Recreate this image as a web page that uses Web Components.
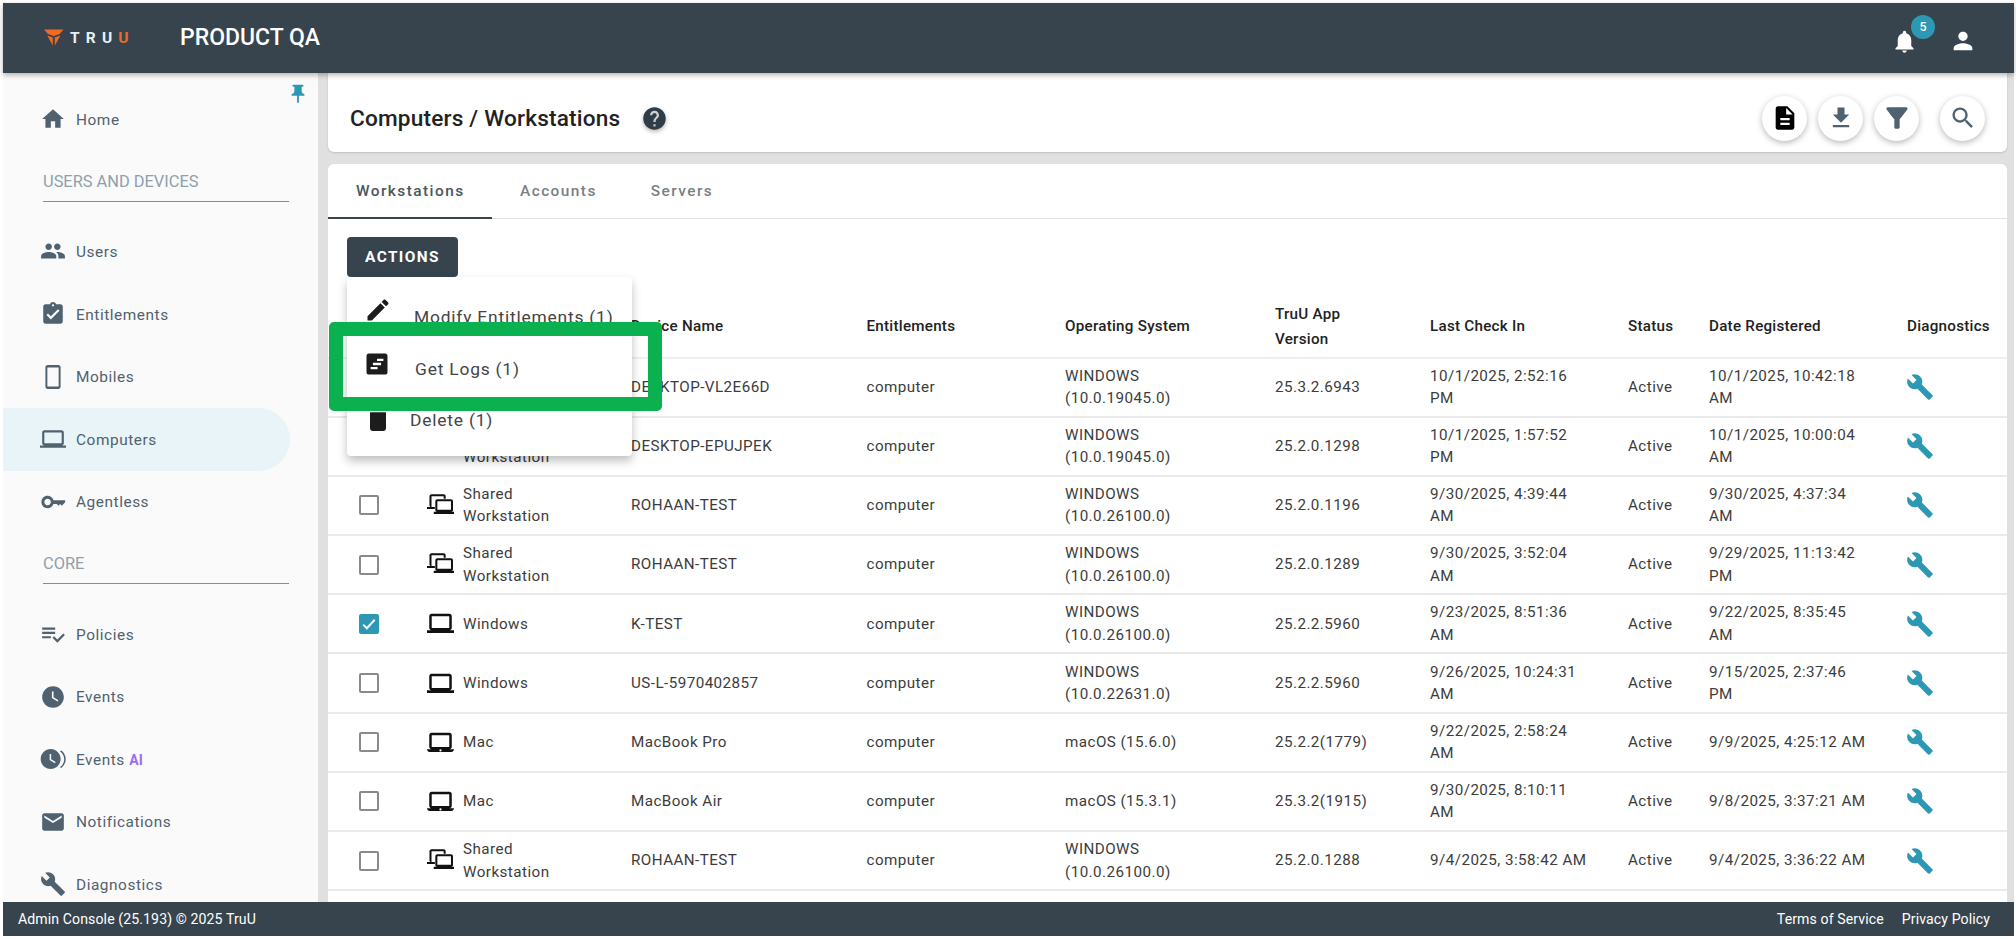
<!DOCTYPE html>
<html lang="en"><head><meta charset="utf-8"><title>TruU</title>
<style>
html,body{margin:0;height:100%;overflow:hidden;background:#fff;font-family:Roboto,"Liberation Sans",sans-serif}
</style></head><body>
<app-shell>
  <app-header slot="header" title-text="PRODUCT QA" badge="5"></app-header>
  <side-nav slot="nav">
    <nav-item icon="home">Home</nav-item>
    <nav-section>USERS AND DEVICES</nav-section>
    <nav-item icon="people">Users</nav-item>
    <nav-item icon="entitle">Entitlements</nav-item>
    <nav-item icon="phone">Mobiles</nav-item>
    <nav-item icon="laptop" active>Computers</nav-item>
    <nav-item icon="key">Agentless</nav-item>
    <nav-section>CORE</nav-section>
    <nav-item icon="policy">Policies</nav-item>
    <nav-item icon="clock">Events</nav-item>
    <nav-item icon="clockai">Events <b slot="tag">AI</b></nav-item>
    <nav-item icon="mail">Notifications</nav-item>
    <nav-item icon="wrench">Diagnostics</nav-item>
  </side-nav>
  <page-head slot="main">Computers / Workstations</page-head>
  <tab-card slot="main">
    <device-row kind="shared" type="Shared&#10;Workstation" name="DESKTOP-VL2E66D" os="WINDOWS&#10;(10.0.19045.0)" ver="25.3.2.6943" last="10/1/2025, 2:52:16&#10;PM" date="10/1/2025, 10:42:18&#10;AM"></device-row>
    <device-row kind="shared" type="Shared&#10;Workstation" name="DESKTOP-EPUJPEK" os="WINDOWS&#10;(10.0.19045.0)" ver="25.2.0.1298" last="10/1/2025, 1:57:52&#10;PM" date="10/1/2025, 10:00:04&#10;AM"></device-row>
    <device-row kind="shared" type="Shared&#10;Workstation" name="ROHAAN-TEST" os="WINDOWS&#10;(10.0.26100.0)" ver="25.2.0.1196" last="9/30/2025, 4:39:44&#10;AM" date="9/30/2025, 4:37:34&#10;AM"></device-row>
    <device-row kind="shared" type="Shared&#10;Workstation" name="ROHAAN-TEST" os="WINDOWS&#10;(10.0.26100.0)" ver="25.2.0.1289" last="9/30/2025, 3:52:04&#10;AM" date="9/29/2025, 11:13:42&#10;PM"></device-row>
    <device-row checked kind="laptop" type="Windows" name="K-TEST" os="WINDOWS&#10;(10.0.26100.0)" ver="25.2.2.5960" last="9/23/2025, 8:51:36&#10;AM" date="9/22/2025, 8:35:45&#10;AM"></device-row>
    <device-row kind="laptop" type="Windows" name="US-L-5970402857" os="WINDOWS&#10;(10.0.22631.0)" ver="25.2.2.5960" last="9/26/2025, 10:24:31&#10;AM" date="9/15/2025, 2:37:46&#10;PM"></device-row>
    <device-row kind="mac" type="Mac" name="MacBook Pro" os="macOS (15.6.0)" ver="25.2.2(1779)" last="9/22/2025, 2:58:24&#10;AM" date="9/9/2025, 4:25:12 AM"></device-row>
    <device-row kind="mac" type="Mac" name="MacBook Air" os="macOS (15.3.1)" ver="25.3.2(1915)" last="9/30/2025, 8:10:11&#10;AM" date="9/8/2025, 3:37:21 AM"></device-row>
    <device-row kind="shared" type="Shared&#10;Workstation" name="ROHAAN-TEST" os="WINDOWS&#10;(10.0.26100.0)" ver="25.2.0.1288" last="9/4/2025, 3:58:42 AM" date="9/4/2025, 3:36:22 AM"></device-row>
  </tab-card>
  <app-footer slot="footer"></app-footer>
  <focus-mark slot="overlay"></focus-mark>
</app-shell>
<script>
const P={
home:'<path d="M10 20v-6h4v6h5v-8h3L12 3 2 12h3v8z"/>',
people:'<path d="M16 11c1.66 0 2.99-1.34 2.99-3S17.66 5 16 5c-1.66 0-3 1.34-3 3s1.34 3 3 3zm-8 0c1.66 0 2.99-1.34 2.99-3S9.66 5 8 5C6.34 5 5 6.34 5 8s1.34 3 3 3zm0 2c-2.33 0-7 1.17-7 3.5V19h14v-2.5c0-2.33-4.67-3.5-7-3.5zm8 0c-.29 0-.62.02-.97.05 1.16.84 1.97 1.97 1.97 3.45V19h6v-2.5c0-2.33-4.67-3.5-7-3.5z"/>',
entitle:'<path d="M19 3h-4.18C14.4 1.84 13.3 1 12 1c-1.3 0-2.4.84-2.82 2H5c-1.1 0-2 .9-2 2v14c0 1.1.9 2 2 2h14c1.1 0 2-.9 2-2V5c0-1.1-.9-2-2-2zm-7 0c.55 0 1 .45 1 1s-.45 1-1 1-1-.45-1-1 .45-1 1-1zm-2 14l-4-4 1.41-1.41L10 14.17l6.59-6.59L18 9l-8 8z"/>',
phone:'<path fill-rule="evenodd" d="M17 1H7C5.9 1 5 1.9 5 3v18c0 1.1.9 2 2 2h10c1.1 0 2-.9 2-2V3c0-1.1-.9-2-2-2zM6.8 3.2h10.4v17.6H6.8z"/>',
laptop:'<path d="M20 18c1.1 0 1.99-.9 1.99-2L22 6c0-1.1-.9-2-2-2H4c-1.1 0-2 .9-2 2v10c0 1.1.9 2 2 2H0v2h24v-2h-4zM4 6h16v10H4V6z"/>',
key:'<path fill-rule="evenodd" d="M12.4 10.2C11.6 7.8 9.5 6.3 7 6.3c-3.2 0-5.7 2.5-5.7 5.7s2.5 5.7 5.7 5.7c2.5 0 4.6-1.5 5.4-3.9h3.1l1.5 1.6 1.6-1.6 1.5 1.6 3.1-3.2v-1.8H12.4zM7 15c-1.7 0-3-1.3-3-3s1.3-3 3-3 3 1.3 3 3-1.3 3-3 3z"/>',
policy:'<path d="M14 10H2v2h12v-2zm0-4H2v2h12V6zM2 16h8v-2H2v2zm19.5-4.5L23 13l-6.99 7-4.51-4.5L13 14l3.01 3 5.49-5.5z"/>',
clock:'<path d="M12 2C6.5 2 2 6.5 2 12s4.5 10 10 10 10-4.5 10-10S17.5 2 12 2zm4.2 14.2L11 13V7h1.5v5.2l4.5 2.7-.8 1.3z"/>',
clockai:'<path transform="translate(-1.2 1) scale(.92)" d="M12 2C6.5 2 2 6.5 2 12s4.5 10 10 10 10-4.5 10-10S17.5 2 12 2zm4.2 14.2L11 13V7h1.5v5.2l4.5 2.7-.8 1.3z"/><path d="M19 4.5c2.4 1.8 4 4.7 4 7.7s-1.6 6-4 7.7" fill="none" stroke="currentColor" stroke-width="1.4"/>',
mail:'<path d="M20 4H4c-1.1 0-1.99.9-1.99 2L2 18c0 1.1.9 2 2 2h16c1.1 0 2-.9 2-2V6c0-1.1-.9-2-2-2zm0 4l-8 5-8-5V6l8 5 8-5v2z"/>',
wrench:'<path d="M22.7 19l-9.1-9.1c.9-2.3.4-5-1.5-6.9-2-2-5-2.4-7.4-1.3L9 6 6 9 1.6 4.7C.4 7.1.9 10.1 2.9 12.1c1.9 1.9 4.6 2.4 6.9 1.5l9.1 9.1c.4.4 1 .4 1.4 0l2.3-2.3c.5-.4.5-1.1.1-1.4z"/>',
bell:'<path d="M12 22c1.1 0 2-.9 2-2h-4c0 1.1.89 2 2 2zm6-6v-5c0-3.07-1.64-5.64-4.5-6.32V4c0-.83-.67-1.5-1.5-1.5s-1.5.67-1.5 1.5v.68C7.63 5.36 6 7.92 6 11v5l-2 2v1h16v-1l-2-2z"/>',
person:'<path d="M12 12c2.21 0 4-1.79 4-4s-1.79-4-4-4-4 1.79-4 4 1.79 4 4 4zm0 2c-2.67 0-8 1.34-8 4v2h16v-2c0-2.66-5.33-4-8-4z"/>',
doc:'<path d="M14 2H6c-1.1 0-1.99.9-1.99 2L4 20c0 1.1.89 2 1.99 2H18c1.1 0 2-.9 2-2V8l-6-6zm2 16H8v-2h8v2zm0-4H8v-2h8v2zm-3-5V3.5L18.5 9H13z"/>',
download:'<path d="M19 9h-4V3H9v6H5l7 7 7-7zM5 18v2h14v-2H5z"/>',
filter:'<path d="M4.25 5.61C6.27 8.2 10 13 10 13v6c0 .55.45 1 1 1h2c.55 0 1-.45 1-1v-6s3.72-4.8 5.74-7.39c.51-.66.04-1.61-.79-1.61H5.04c-.83 0-1.3.95-.79 1.61z"/>',
search:'<path d="M15.5 14h-.79l-.28-.27C15.41 12.59 16 11.11 16 9.5 16 5.91 13.09 3 9.5 3S3 5.91 3 9.5 5.91 16 9.5 16c1.61 0 3.09-.59 4.23-1.57l.27.28v.79l5 4.99L20.49 19l-4.99-5zm-6 0C7.01 14 5 11.99 5 9.5S7.01 5 9.5 5 14 7.01 14 9.5 11.99 14 9.5 14z"/>',
help:'<path d="M12 2C6.48 2 2 6.48 2 12s4.48 10 10 10 10-4.48 10-10S17.52 2 12 2zm1 17h-2v-2h2v2zm2.07-7.75l-.9.92C13.45 12.9 13 13.5 13 15h-2v-.5c0-1.1.45-2.1 1.17-2.83l1.24-1.26c.37-.36.59-.86.59-1.41 0-1.1-.9-2-2-2s-2 .9-2 2H8c0-2.21 1.79-4 4-4s4 1.79 4 4c0 .88-.36 1.68-.93 2.25z"/>',
edit:'<path d="M3 17.25V21h3.75L17.81 9.94l-3.75-3.75L3 17.25zM20.71 7.04c.39-.39.39-1.02 0-1.41l-2.34-2.34c-.39-.39-1.02-.39-1.41 0l-1.83 1.83 3.75 3.75 1.83-1.83z"/>',
trash:'<path d="M6 19c0 1.1.9 2 2 2h8c1.1 0 2-.9 2-2V7H6v12zM19 4h-3.5l-1-1h-5l-1 1H5v2h14V4z"/>',
logs:'<path fill-rule="evenodd" d="M19 3H5C3.9 3 3 3.9 3 5v14c0 1.1.9 2 2 2h14c1.1 0 2-.9 2-2V5c0-1.1-.9-2-2-2zM12 7.5h5.5v2H12zM8.5 11h7v2h-7zM6.5 14.5h6v2h-6z"/>',
pin:'<path d="M16 9V4h1c.55 0 1-.45 1-1s-.45-1-1-1H7c-.55 0-1 .45-1 1s.45 1 1 1h1v5c0 1.66-1.34 3-3 3v2h5.97v7l1 1 1-1v-7H19v-2c-1.66 0-3-1.34-3-3z"/>',
wlaptop:'<path fill-rule="evenodd" d="M20 18c1.1 0 2-.9 2-2V5.4c0-1.1-.9-2-2-2H4c-1.1 0-2 .9-2 2V16c0 1.1.9 2 2 2H0v2.4h24V18h-4zM4.2 5.6h15.6V16H4.2z"/>',
mac:'<path fill-rule="evenodd" d="M20 18c1.1 0 2-.9 2-2V5.4c0-1.1-.9-2-2-2H4c-1.1 0-2 .9-2 2V16c0 1.1.9 2 2 2H0c0 1.2 1 2.4 2.2 2.4h19.6c1.2 0 2.2-1.2 2.2-2.4h-4zM4.2 5.6h15.6V16H4.2zM12 20a1 1 0 1 1 0-2 1 1 0 0 1 0 2z"/>',
shared:'<path fill-rule="evenodd" d="M14.8 2H4.2C3 2 2.2 2.8 2.2 4v7.8c0 .7.3 1.2.8 1.6H0V15h7v-1.7H4V3.8h10.8V6h1.8V4c0-1.2-.8-2-1.8-2z"/><path fill-rule="evenodd" d="M21.7 17.6c.8 0 1.4-.7 1.4-1.5V8.2c0-1.1-.8-1.8-1.8-1.8H9.2c-1 0-1.8.7-1.8 1.8v7.9c0 .8.6 1.5 1.4 1.5H6v1.9h18v-1.9h-2.3zM9.2 8.2h12.1v7.6H9.2z"/>'
};
function def(name,css,html,init){
  customElements.define(name,class extends HTMLElement{
    constructor(){super();this.attachShadow({mode:'open'}).innerHTML='<style>'+css+'</style>'+html;}
    connectedCallback(){if(init&&!this._i){this._i=1;init(this,this.shadowRoot)}}
  });
}
const esc=s=>(s||'').replace(/&/g,'&amp;').replace(/</g,'&lt;');

customElements.define('ui-icon',class extends HTMLElement{
  static get observedAttributes(){return ['name','size']}
  constructor(){super();this.attachShadow({mode:'open'})}
  connectedCallback(){this.draw()}
  attributeChangedCallback(){if(this.isConnected)this.draw()}
  draw(){
    const s=this.getAttribute('size')||26;
    this.shadowRoot.innerHTML='<style>:host{display:inline-flex;flex:none;width:'+s+'px;height:'+s+'px;color:inherit}svg{width:100%;height:100%;display:block;fill:currentColor}</style><svg viewBox="0 0 24 24" aria-hidden="true">'+(P[this.getAttribute('name')]||'')+'</svg>';
  }
});

def('app-shell',`
:host{display:grid;position:relative;box-sizing:border-box;height:939px;padding:3px 2px 3px 3px;grid-template-rows:70px 1fr 34px;grid-template-columns:315px 1fr;overflow:hidden}
.h{grid-column:1/3;position:relative;z-index:5;box-shadow:0 2px 5px rgba(0,0,0,.3)}
.n{min-height:0;overflow:hidden;background:#fafafa}
.m{min-height:0;overflow:hidden;background:#e0e0e0;padding:0 7px 0 10px;display:flex;flex-direction:column;gap:12px}
.f{grid-column:1/3}
`,`<div class="h"><slot name="header"></slot></div><div class="n"><slot name="nav"></slot></div><div class="m"><slot name="main"></slot></div><div class="f"><slot name="footer"></slot></div><slot name="overlay"></slot>`);

def('app-header',`
:host{display:flex;align-items:center;height:70px;background:#37444d;color:#fff;padding-left:41px;box-sizing:border-box}
.logo{display:flex;align-items:center;width:136px}
.word{font:700 15.5px Roboto,sans-serif;letter-spacing:6.2px;margin-left:6px;white-space:nowrap;color:#eceff1}
.word i{font-style:normal;color:#f26a21}
h1{font:500 23px Roboto,sans-serif;margin:0;flex:1;margin-top:-1px}
.bell{position:relative;display:flex;margin-right:31px;margin-top:6px}
.badge{position:absolute;left:20px;top:-13px;width:24px;height:24px;border-radius:50%;background:#2d98b3;font:500 12.5px/24px Roboto,sans-serif;text-align:center;color:#fff}
.me{display:flex;margin-right:37px;margin-top:6px}
`,`<div class="logo"><svg width="20" height="18" viewBox="0 0 20 18"><path fill="#f26a21" d="M0 .5h19.5L15.6 5 9.8 7 4 5zM3.2 6.6l5.6 2v7.9zM16.4 6.6l-5.6 2v7.9z"/></svg><span class="word">TRU<i>U</i></span></div><h1></h1><div class="bell"><ui-icon name="bell" size="27"></ui-icon><span class="badge"></span></div><div class="me"><ui-icon name="person" size="28"></ui-icon></div>`,
(e,r)=>{r.querySelector('h1').textContent=e.getAttribute('title-text');r.querySelector('.badge').textContent=e.getAttribute('badge')});

def('side-nav',`
:host{display:block;position:relative;padding-top:15px;height:100%;box-sizing:border-box;color:#50626f}
.pin{position:absolute;left:284px;top:10px;color:#2d98b3}
`,`<ui-icon class="pin" name="pin" size="22"></ui-icon><slot></slot>`);

def('nav-section',`
:host{display:block;box-sizing:content-box;margin:0 29px 0 40px;height:50px;border-bottom:1px solid #8c8c8c;margin-bottom:18.6px;font:400 16.4px/62px Roboto,sans-serif;color:#8fa0ac;white-space:nowrap}
`,`<slot></slot>`);

def('nav-item',`
:host{display:flex;align-items:center;height:62.6px;font:400 15.4px Roboto,sans-serif;letter-spacing:.55px;color:#50626f;border-radius:0 32px 32px 0;width:287px}
:host([active]){background:#e8f4f7}
ui-icon{margin:0 10px 0 37px}
span{padding-top:1px}
::slotted(b){font:700 14px Roboto,sans-serif;color:#9b6df0;letter-spacing:.2px}
`,`<ui-icon></ui-icon><span><slot></slot><slot name="tag"></slot></span>`,
(e,r)=>{r.querySelector('ui-icon').setAttribute('name',e.getAttribute('icon'))});

def('round-btn',`
:host{display:flex;align-items:center;justify-content:center;width:45px;height:45px;border-radius:50%;background:#fff;box-shadow:0 2px 6px rgba(0,0,0,.28)}
`,`<slot></slot>`);

def('page-head',`
:host{display:flex;align-items:center;flex:none;height:79px;background:#fff;border-radius:0 0 6px 6px;box-shadow:0 1px 2px rgba(0,0,0,.15);padding:11px 22px 0 22px;box-sizing:border-box}
h2{font:500 22.6px Roboto,sans-serif;color:#222;margin:0;letter-spacing:.2px}
.help{display:flex;color:#2f3d48;margin-left:21px;filter:drop-shadow(0 2px 2px rgba(0,0,0,.3))}
.sp{flex:1}
.b{display:flex;gap:11px}
.s{margin-left:21px;color:#50626f}
`,`<h2><slot></slot></h2><span class="help"><ui-icon name="help" size="27"></ui-icon></span><span class="sp"></span><div class="b"><round-btn style="color:#000"><ui-icon name="doc" size="28"></ui-icon></round-btn><round-btn style="color:#50626f"><ui-icon name="download" size="28"></ui-icon></round-btn><round-btn style="color:#50626f"><ui-icon name="filter" size="32"></ui-icon></round-btn></div><round-btn class="s"><ui-icon name="search" size="28"></ui-icon></round-btn>`);

const COLS='99px 204px 235.5px 198.5px 210px 155px 198px 81px 198px 100px';

def('tab-card',`
:host{display:block;flex:1;min-height:0;background:#fff;border-radius:6px 6px 0 0;position:relative;--cols:${COLS}}
.tabs{display:flex;height:54px;border-bottom:1px solid #e0e0e0;position:relative;font:500 15.4px Roboto,sans-serif;letter-spacing:1.45px;color:#7a7f84}
.tabs span{display:flex;align-items:center;box-sizing:border-box;height:54px}
.tabs .on{color:#4a5660;width:164px;padding-left:28px;border-bottom:2px solid #37444d;height:55px;margin-right:28px}
.tabs .b{margin-right:54px}
.bar{height:77.5px;position:relative;box-sizing:border-box;padding:18px 0 0 19px}
button{all:unset;display:block;width:111px;height:40px;background:#37444d;color:#fff;border-radius:4px;text-align:center;font:700 15.4px/40px Roboto,sans-serif;letter-spacing:1.4px}
.head{display:grid;grid-template-columns:var(--cols);height:62px;align-items:center;border-bottom:2px solid #efefef;box-sizing:border-box;font:500 15.2px/24.5px Roboto,sans-serif;color:#222;letter-spacing:.25px}
action-menu{position:absolute;left:19px;top:113px;z-index:3}
`,`<div class="tabs"><span class="on">Workstations</span><span class="b">Accounts</span><span>Servers</span></div>
<div class="bar"><button>ACTIONS</button></div>
<action-menu></action-menu>
<div class="head"><span></span><span></span><span>Device Name</span><span>Entitlements</span><span>Operating System</span><span>TruU App<br>Version</span><span>Last Check In</span><span>Status</span><span>Date Registered</span><span>Diagnostics</span></div>
<slot></slot>`);

def('action-menu',`
:host{display:block;width:285px;height:179px;background:#fff;border-radius:4px;box-shadow:0 5px 10px rgba(0,0,0,.25);font:400 17.4px Roboto,sans-serif;letter-spacing:.8px;color:#444;overflow:hidden}
.i{display:flex;box-sizing:border-box;color:#444}
ui-icon{color:#1c1c1c}
.i1{height:63px;padding:19px 0 0 17px}.i1 span{margin:11px 0 0 22px}
.i2{height:53px;padding:0 0 0 16px}.i2 span{margin:19px 0 0 24px}.i2 ui-icon{margin-top:10px}
.i3{height:63px;padding:10px 0 0 15px}.i3 span{margin:7px 0 0 16px}
`,`<div class="i i1"><ui-icon name="edit" size="28"></ui-icon><span>Modify Entitlements (1)</span></div>
<div class="i i2"><ui-icon name="logs" size="28"></ui-icon><span>Get Logs (1)</span></div>
<div class="i i3"><ui-icon name="trash" size="32"></ui-icon><span>Delete (1)</span></div>`);

customElements.define('device-row',class extends HTMLElement{
  constructor(){super();this.attachShadow({mode:'open'})}
  connectedCallback(){
    const g=k=>esc(this.getAttribute(k));
    const icon={shared:'shared',laptop:'wlaptop',mac:'mac'}[this.getAttribute('kind')];
    const box=this.hasAttribute('checked')?'<span class="cb on"><svg viewBox="0 0 16 16"><path d="M2.2 8.6l3.7 3.6 7.8-8.4" fill="none" stroke="#fff" stroke-width="2"/></svg></span>':'<span class="cb"></span>';
    this.shadowRoot.innerHTML=`<style>
:host{display:grid;grid-template-columns:var(--cols);height:59.2px;align-items:center;box-sizing:border-box;border-bottom:2px solid #eaeaea;font:400 15.2px/22.4px Roboto,sans-serif;letter-spacing:.45px;color:#3c3c3c}
span{white-space:pre-line}
.cb{display:block;box-sizing:border-box;width:20px;height:20px;margin-left:31px;border:2px solid #8a8a8a;border-radius:2px}
.cb.on{background:#2d98b3;border-color:#2d98b3}.cb svg{display:block;width:16px;height:16px}
.t{display:flex;align-items:center;gap:9px;color:#111}.t span{color:#3c3c3c}
.w{color:#2d98b3;display:flex;margin-left:-1px}
</style>${box}<div class="t"><ui-icon name="${icon}" size="27"></ui-icon><span>${g('type')}</span></div><span>${g('name')}</span><span>computer</span><span>${g('os')}</span><span>${g('ver')}</span><span>${g('last')}</span><span>Active</span><span>${g('date')}</span><span class="w"><ui-icon name="wrench" size="28"></ui-icon></span>`;
  }
});

def('app-footer',`
:host{display:flex;align-items:center;height:34px;background:#37444d;color:#fff;font:400 14.1px Roboto,sans-serif;padding:0 24px 0 15px;box-sizing:border-box;letter-spacing:.1px;gap:18px}
.s{flex:1}
`,`<span>Admin Console (25.193) © 2025 TruU</span><span class="s"></span><span>Terms of Service</span><span>Privacy Policy</span>`);

def('focus-mark',`
:host{position:absolute;left:329px;top:322px;width:333px;height:89px;box-sizing:border-box;border:14px solid #0bb04f;border-radius:5px;z-index:8;pointer-events:none}
`,``);
</script>
</body></html>
